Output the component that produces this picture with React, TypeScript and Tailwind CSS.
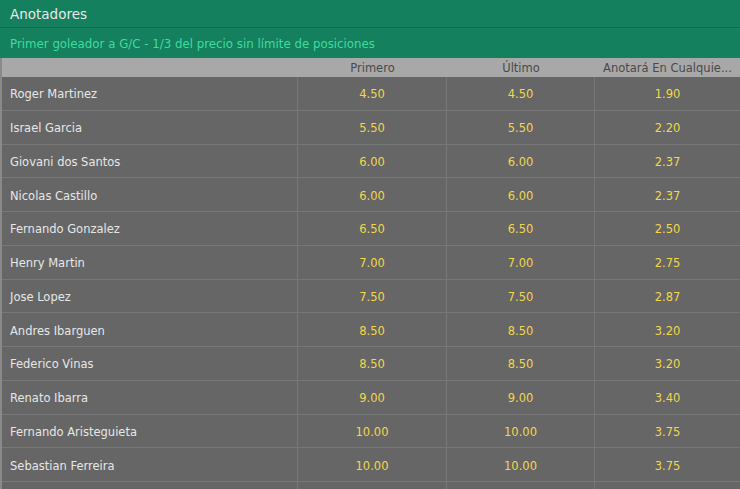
import React from "react";

const rows: [string, string, string, string][] = [
  ["Roger Martinez", "4.50", "4.50", "1.90"],
  ["Israel Garcia", "5.50", "5.50", "2.20"],
  ["Giovani dos Santos", "6.00", "6.00", "2.37"],
  ["Nicolas Castillo", "6.00", "6.00", "2.37"],
  ["Fernando Gonzalez", "6.50", "6.50", "2.50"],
  ["Henry Martin", "7.00", "7.00", "2.75"],
  ["Jose Lopez", "7.50", "7.50", "2.87"],
  ["Andres Ibarguen", "8.50", "8.50", "3.20"],
  ["Federico Vinas", "8.50", "8.50", "3.20"],
  ["Renato Ibarra", "9.00", "9.00", "3.40"],
  ["Fernando Aristeguieta", "10.00", "10.00", "3.75"],
  ["Sebastian Ferreira", "10.00", "10.00", "3.75"],
  ["", "", "", ""],
];

export default function App() {
  return (
    <div
      className="w-[740px] h-[489px] overflow-hidden bg-[#666666]"
      style={{ fontFamily: '"DejaVu Sans", Verdana, sans-serif' }}
    >
      <div className="h-[28px] bg-[#14805e] border-b border-[#0f6b4e] flex items-center px-[10px] pt-[1px] text-[13.5px] text-[#e8e8e8]">
        Anotadores
      </div>
      <div className="h-[30px] bg-[#14805e] flex items-center px-[10px] pt-[3px] text-[11.8px] text-[#3fdc9e]">
        Primer goleador a G/C - 1/3 del precio sin límite de posiciones
      </div>
      <div className="border-l-2 border-[#8a8a8a]">
        <div className="h-[19px] bg-[#a8a8a8] grid grid-cols-[296px_149px_148px_145px] text-[11.5px] text-[#4a4a4a] items-center pt-[2px]">
          <div />
          <div className="text-center">Primero</div>
          <div className="text-center">Último</div>
          <div className="text-center whitespace-nowrap">Anotará En Cualquie...</div>
        </div>
        {rows.map((r, i) => (
          <div
            key={i}
            className="h-[33.75px] grid grid-cols-[296px_149px_148px_145px] border-b border-[#777777] text-[11.5px]"
          >
            <div className="flex items-center pl-[8px] pt-[3px] text-[#e6e6e6] border-r border-[#777777]">{r[0]}</div>
            <div className="flex items-center justify-center pt-[3px] text-[#f2d64b] border-r border-[#777777]">{r[1]}</div>
            <div className="flex items-center justify-center pt-[3px] text-[#f2d64b] border-r border-[#777777]">{r[2]}</div>
            <div className="flex items-center justify-center pt-[3px] text-[#f2d64b]">{r[3]}</div>
          </div>
        ))}
      </div>
    </div>
  );
}
